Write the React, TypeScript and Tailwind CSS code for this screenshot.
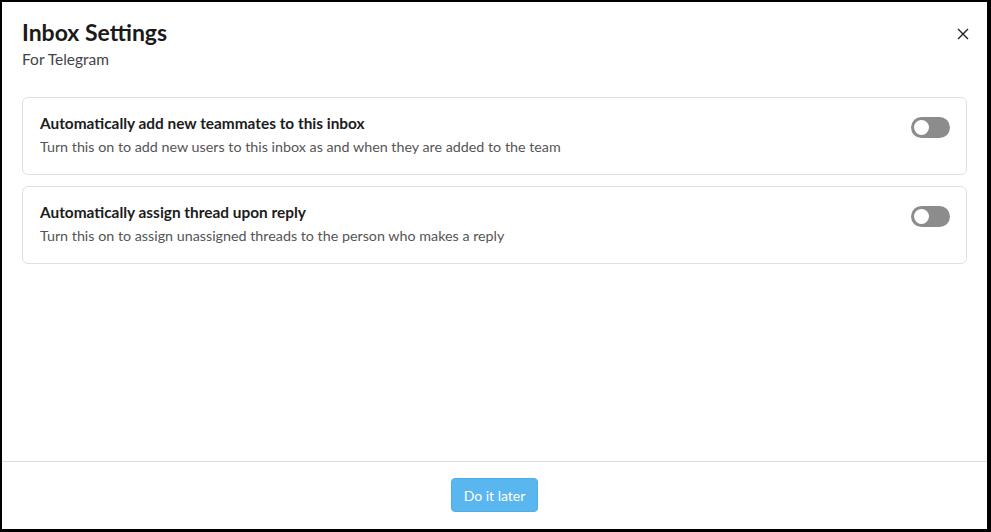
import React from "react";

function Toggle() {
  return (
    <div className="mt-[4px] flex h-[21px] w-[39px] shrink-0 items-center rounded-full bg-[#8c8c8c] pl-[3px]">
      <div className="h-[15px] w-[15px] rounded-full bg-white" />
    </div>
  );
}

function Card({ title, desc }: { title: string; desc: string }) {
  return (
    <div className="flex items-start justify-between rounded-md border border-[#e0e0e0] bg-white pb-[17px] pl-[17px] pr-[16px] pt-[15px]">
      <div className="flex flex-col">
        <div className="text-[15.4px] font-bold leading-5 text-[#1c1c1c]">{title}</div>
        <div className="mt-[4px] text-[14.3px] leading-5 text-[#555]">{desc}</div>
      </div>
      <Toggle />
    </div>
  );
}

export default function App() {
  return (
    <div
      className="flex h-[532px] w-[991px] flex-col border-b-[3px] border-l-2 border-r-[4px] border-t-2 border-black bg-white"
      style={{ fontFamily: "Lato, 'Noto Sans', sans-serif" }}
    >
      <div className="flex flex-1 flex-col px-5 pt-[16px]">
        <div className="flex items-start justify-between">
          <div className="flex flex-col">
            <div className="text-[23px] font-bold leading-7 text-[#1a1a1a]">Inbox Settings</div>
            <div className="mt-[3px] text-[15.5px] leading-5 text-[#444]">For Telegram</div>
          </div>
          <button className="mr-[-6px] mt-[6px] flex h-5 w-5 items-center justify-center text-[#222]">
            <svg width="12" height="12" viewBox="0 0 12 12" fill="none" stroke="currentColor" strokeWidth="1.4">
              <path d="M1 1 L11 11 M11 1 L1 11" />
            </svg>
          </button>
        </div>
        <div className="mt-[28px] flex flex-col gap-[11px]">
          <Card
            title="Automatically add new teammates to this inbox"
            desc="Turn this on to add new users to this inbox as and when they are added to the team"
          />
          <Card
            title="Automatically assign thread upon reply"
            desc="Turn this on to assign unassigned threads to the person who makes a reply"
          />
        </div>
      </div>
      <div className="flex h-[68px] items-start justify-center border-t border-[#dcdcdc] pt-[16px]">
        <button className="h-[34px] rounded-[4px] border border-[#4eaee8] bg-[#5ab6ee] px-3 text-[14px] text-white">
          Do it later
        </button>
      </div>
    </div>
  );
}
